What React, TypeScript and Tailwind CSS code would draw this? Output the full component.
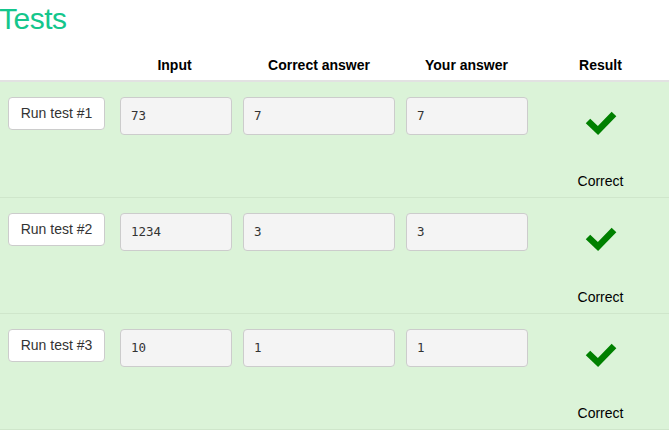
const tests = [
  { n: 1, input: '73', expected: '7', actual: '7' },
  { n: 2, input: '1234', expected: '3', actual: '3' },
  { n: 3, input: '10', expected: '1', actual: '1' },
];

const cols = 'grid grid-cols-[112px_125px_164px_131px_137px]';

function Check() {
  return (
    <svg width="32" height="27" viewBox="0 0 32 27">
      <polyline points="3,12 13,21.5 29,5" fill="none" stroke="#008000" strokeWidth="6.5" strokeLinejoin="miter" />
    </svg>
  );
}

function Field({ value, className }: { value: string; className: string }) {
  return (
    <div className={`h-[38px] flex items-center pl-[10px] bg-[#f4f4f4] border border-[#cccccc] rounded-[4px] font-['DejaVu_Sans_Mono',monospace] text-[12.5px] text-[#333] ${className}`}>
      {value}
    </div>
  );
}

export default function App() {
  return (
    <div className="w-[672px] h-[433px] bg-white font-['Liberation_Sans',Arial,sans-serif] overflow-hidden">
      <h1 className="text-[30px] leading-[30px] pt-[4px] text-[#14c68c] -ml-[1px] tracking-[-0.5px]">Tests</h1>
      <div className="w-[669px] mt-[16px]">
        <div className={`${cols} h-[32px] pt-[5px] border-b-2 border-[#e2e2e2] text-[14px] font-bold text-black`}>
          <div />
          <div className="text-center">Input</div>
          <div className="text-center">Correct answer</div>
          <div className="text-center">Your answer</div>
          <div className="text-center">Result</div>
        </div>
        {tests.map((t) => (
          <div key={t.n} className={`${cols} h-[116px] bg-[#dbf3d8] border-b border-[#cfe6cb] items-start pt-[15px]`}>
            <div className="pl-[8px]">
              <button className="w-[97px] h-[33px] bg-white border border-[#cccccc] rounded-[4px] text-[14px] text-[#333] text-center">
                Run test #{t.n}
              </button>
            </div>
            <div className="pl-[8px]">
              <Field value={t.input} className="w-[112px]" />
            </div>
            <div className="pl-[6px]">
              <Field value={t.expected} className="w-[152px]" />
            </div>
            <div className="pl-[5px]">
              <Field value={t.actual} className="w-[122px]" />
            </div>
            <div className="flex flex-col items-center pt-[12px] text-[14px] text-black">
              <Check />
              <div className="mt-[37px] leading-[16px]">Correct</div>
            </div>
          </div>
        ))}
      </div>
    </div>
  );
}
